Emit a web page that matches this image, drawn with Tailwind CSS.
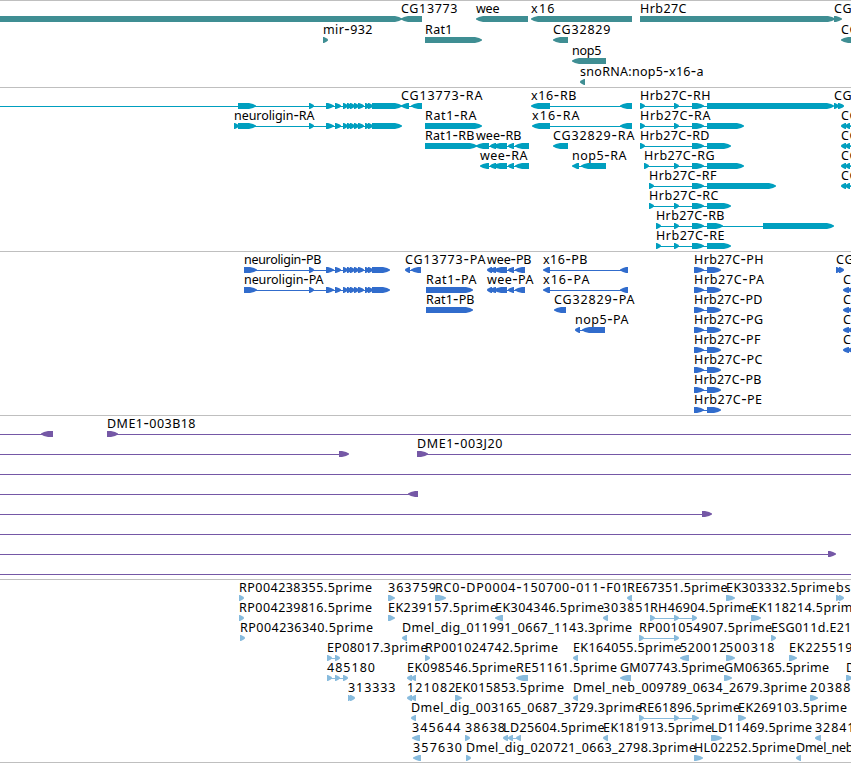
<!DOCTYPE html>
<html lang="en"><head><meta charset="utf-8"><title>Genome browser</title>
<script src="https://cdn.jsdelivr.net/npm/@tailwindcss/browser@4"></script></head>
<body class="bg-white overflow-hidden">
<main class="flex flex-col w-[851px] h-[763px] overflow-hidden border-b border-[#bfbfbf]">
<section class="h-[87px] border-t border-[#bfbfbf] text-[#3f8e93]"><svg id="genes" class="block w-full h-full"></svg></section>
<section class="h-[164px] border-t border-[#bfbfbf] text-[#009fbf]"><svg id="transcripts" class="block w-full h-full"></svg></section>
<section class="h-[164px] border-t border-[#bfbfbf] text-[#316ccc]"><svg id="proteins" class="block w-full h-full"></svg></section>
<section class="h-[164px] border-t border-[#bfbfbf] text-[#7558a6]"><svg id="clones" class="block w-full h-full"></svg></section>
<section class="h-[183px] border-t border-[#bfbfbf] text-[#88bbdd]"><svg id="ests" class="block w-full h-full"></svg></section>
</main>
<script>
// Each feature: "label start end ; strand ; exon-exon,..." (end 0 keeps the natural width)
const NL='309-314,326-334,335-341,343-348,347-352,350-355,354-359,358-364,365-370,368-373';
const tracks={
genes:{top:1,rows:{
19:['|R|-9-402','CG13773 401 457|L|401-422','wee 476 499|L|476-528','x16 531 554|L|531-632','Hrb27C 640 686|R|640-835','CG 834 851|R|834-842'],
40:['mir-932 323 372|R|323-328','Rat1 425 452|R|425-482','CG32829 553 610|L|553-568','CG 841 858|L|841-870'],
61:['nop5 572 601|L|572-606'],
82:['snoRNA:nop5-x16-a 580 703|L|580-585']}},
transcripts:{top:88,rows:{
106:['|R|-20--10,238-256,'+NL+',372-402','CG13773-RA 401 482|L|401-409,411-422','x16-RB 531 576|L|531-550,620-632','Hrb27C-RH 640 710|R|640-645,674-679,692-704,707-834','CG 834 851|R|834-839,838-844'],
126:['neuroligin-RA 234 314|R|234-239,238-256,'+NL+',372-402','Rat1-RA 425 476|R|425-482','x16-RA 532 579|L|532-550,620-632','Hrb27C-RA 640 710|R|640-645,674-679,692-704,707-744','CG 841 858|L|841-846,845-850,850-860'],
146:['Rat1-RB 425 474|R|425-477','wee-RB 476 521|L|476-489,490-496,493-507,508-514,515-529','CG32829-RA 553 634|L|553-568','Hrb27C-RD 640 709|R|640-645,692-704,707-731','CG 841 858|L|841-846,845-850,850-860'],
166:['wee-RA 480 527|L|480-489,490-496,493-507,508-514,515-529','nop5-RA 572 626|L|572-579,581-606','Hrb27C-RG 644 714|R|644-649,674-679,692-704,707-744','CG 841 858|L|841-846,845-850,850-860'],
186:['Hrb27C-RF 649 716|R|649-654,692-704,707-776','CG 841 858|L|841-846,845-850,850-860'],
206:['Hrb27C-RC 649 718|R|649-654,674-679,692-704,707-731'],
226:['Hrb27C-RB 656 724|R|656-661,674-679,692-704,707-723,763-834'],
246:['Hrb27C-RE 656 724|R|656-661,674-679,692-704,707-731']}},
proteins:{top:252,rows:{
270:['neuroligin-PB 244 321|R|244-257,'+NL+',372-390','CG13773-PA 405 485|L|405-410,411-421','wee-PB 487 531|L|487-492,490-496,494-507,508-514,515-525','x16-PB 543 587|L|543-550,620-628','Hrb27C-PH 694 763|R|694-704,707-721','CG 836 853|R|836-841,839-844'],
290:['neuroligin-PA 244 323|R|244-257,'+NL+',372-390','Rat1-PA 426 476|R|426-473','wee-PA 487 533|L|487-492,490-496,494-507,508-514,515-525','x16-PA 543 589|L|543-550,620-628','Hrb27C-PA 694 763.5|R|694-704,707-721','C 843 0|L|843-849,847-860'],
310:['Rat1-PB 426 474|R|426-473','CG32829-PA 554 634|L|554-566','Hrb27C-PD 694 762|R|694-704,707-721','C 843 0|L|843-849,847-860'],
330:['nop5-PA 575 628|L|575-580,582-605','Hrb27C-PG 694 762.5|R|694-704,707-721','C 843 0|L|843-849,847-860'],
350:['Hrb27C-PF 694 760|R|694-704,707-721','C 843 0|L|843-849,847-860'],
370:['Hrb27C-PC 694 762|R|694-704,707-721'],
390:['Hrb27C-PB 694 761|R|694-704,707-721'],
410:['Hrb27C-PE 694 761.5|R|694-704,707-721']}},
clones:{top:416,rows:{
434:['|L|-20--10,41-53','DME1-003B18 107 195|R|107-118,870-880'],
454:['|R|-20--10,339-349','DME1-003J20 417 502|R|417-428,870-880'],
474:['|R|-20--10,870-880'],
494:['|L|-20--10,408-418'],
514:['|R|-20--10,702-712'],
534:['|R|-20--10,870-880'],
554:['|R|-20--10,828-836'],
574:['|R|-20--10,870-880']}},
ests:{top:580,rows:{
598:['RP004238355.5prime 239 371.5|R|239-244','363759 388 435.5|R|388-395','RC0-DP0004-150700-011-F01 435 628|R|435-446','RE67351.5prime 627 727|L|627-632','EK303332.5prime 726 834.5|R|726-735','bs 836 850|R|836-841,839-844'],
618:['RP004239816.5prime 239 371.5|R|239-244','EK239157.5prime 388 496.5|R|388-395','EK304346.5prime 495 603.5|L|495-503','303851 603 650|L|603-608','RH46904.5prime 650 752|R|650-655,674-679,692-697','EK118214.5prime 751 859.5|R|751-761'],
638:['RP004236340.5prime 240 372.5|R|240-245','Dmel_dig_011991_0667_1143.3prime 402 631.5|L|402-407','RP001054907.5prime 639 771.5|R|639-644,674-679','ESG011d.E21 771 851|R|771-776'],
658:['EP08017.3prime 327 427|R|327-332,335-340','RP001024742.5prime 425 557.5|R|425-430','EK164055.5prime 573 681|L|573-578','520012 680 726|L|680-689','500318 726 774|R|726-735','EK225519 789 852|R|789-797'],
678:['485180 327 374.5|R|327-332,335-340,343-348','EK098546.5prime 407 515.5|L|407-412,411-416','RE51161.5prime 516 616.5|L|516-528','GM07743.5prime 620 724|L|620-631','GM06365.5prime 724 828.5|R|724-732','D 846 0|R|846-853'],
698:['313333 348 395|R|348-352,350-355','121082 407 455|L|407-412,411-416','EK015853.5prime 455 563.5|R|455-462','Dmel_neb_009789_0634_2679.3prime 573 806.5|L|573-578','20388 810 850|R|810-818'],
718:['Dmel_dig_003165_0687_3729.3prime 411 641.5|L|411-416','RE61896.5prime 639 739.5|R|639-644,674-679,692-699','EK269103.5prime 738 846.5|R|738-746'],
738:['345644 412 460|L|412-420','38638 465 504.5|R|465-470','LD25604.5prime 503 604|L|503-508,508-513,516-521','EK181913.5prime 603 711.5|L|603-608','LD11469.5prime 711 811.5|R|711-722','32841 815 854|L|815-821'],
758:['357630 413 461.5|L|413-421','Dmel_dig_020721_0663_2798.3prime 466 695.5|R|466-471','HL02252.5prime 694 795|R|694-703','Dmel_neb 796 853|L|796-801']}}};
for(const [id,t] of Object.entries(tracks)){
  let out='';
  for(const [row,items] of Object.entries(t.rows)) for(const item of items){
    const [lab,dir,spec]=item.split('|'), c=+row-t.top;
    const ex=spec.split(',').map(s=>s.match(/^(-?\d+)-(-?\d+)$/).slice(1).map(Number));
    const first=ex[0][0], last=ex[ex.length-1][1];
    if(ex.length>1) out+=`<rect x="${first+1}" y="${c}" width="${last-first-2}" height="1"/>`;
    for(const [a,b] of ex){
      const w=b-a, k=w<=6?w-1:Math.min(7,w-2), m=w<=6?1.6:3, h=w<=6?1.8:2;
      const p=dir==='R'?`M${a} ${c-3}H${b-k}L${b-m} ${c-h}L${b} ${c-.5}V${c+.6}L${b-m} ${c+h}L${b-k} ${c+3}H${a}Z`
                    :`M${b} ${c-3}H${a+k}L${a+m} ${c-h}L${a} ${c-.5}V${c+.6}L${a+m} ${c+h}L${a+k} ${c+3}H${b}Z`;
      out+=`<path d="${p}"/>`;
    }
    if(lab){const [s,x,e]=lab.split(' ');
      out+=`<text x="${x}" y="${c-6}" fill="#000"${+e?` textLength="${e-x+.5}"`:''}>${s.replace(/-/g,'<tspan font-family="DejaVu Sans" font-size="15">-</tspan>')}</text>`;}
  }
  const svg=document.getElementById(id);
  svg.setAttribute('fill','currentColor');
  svg.setAttribute('font-family','"Noto Sans", "Open Sans", sans-serif');
  svg.setAttribute('font-size','12.5');
  svg.innerHTML=out;
}
</script>
</body></html>
